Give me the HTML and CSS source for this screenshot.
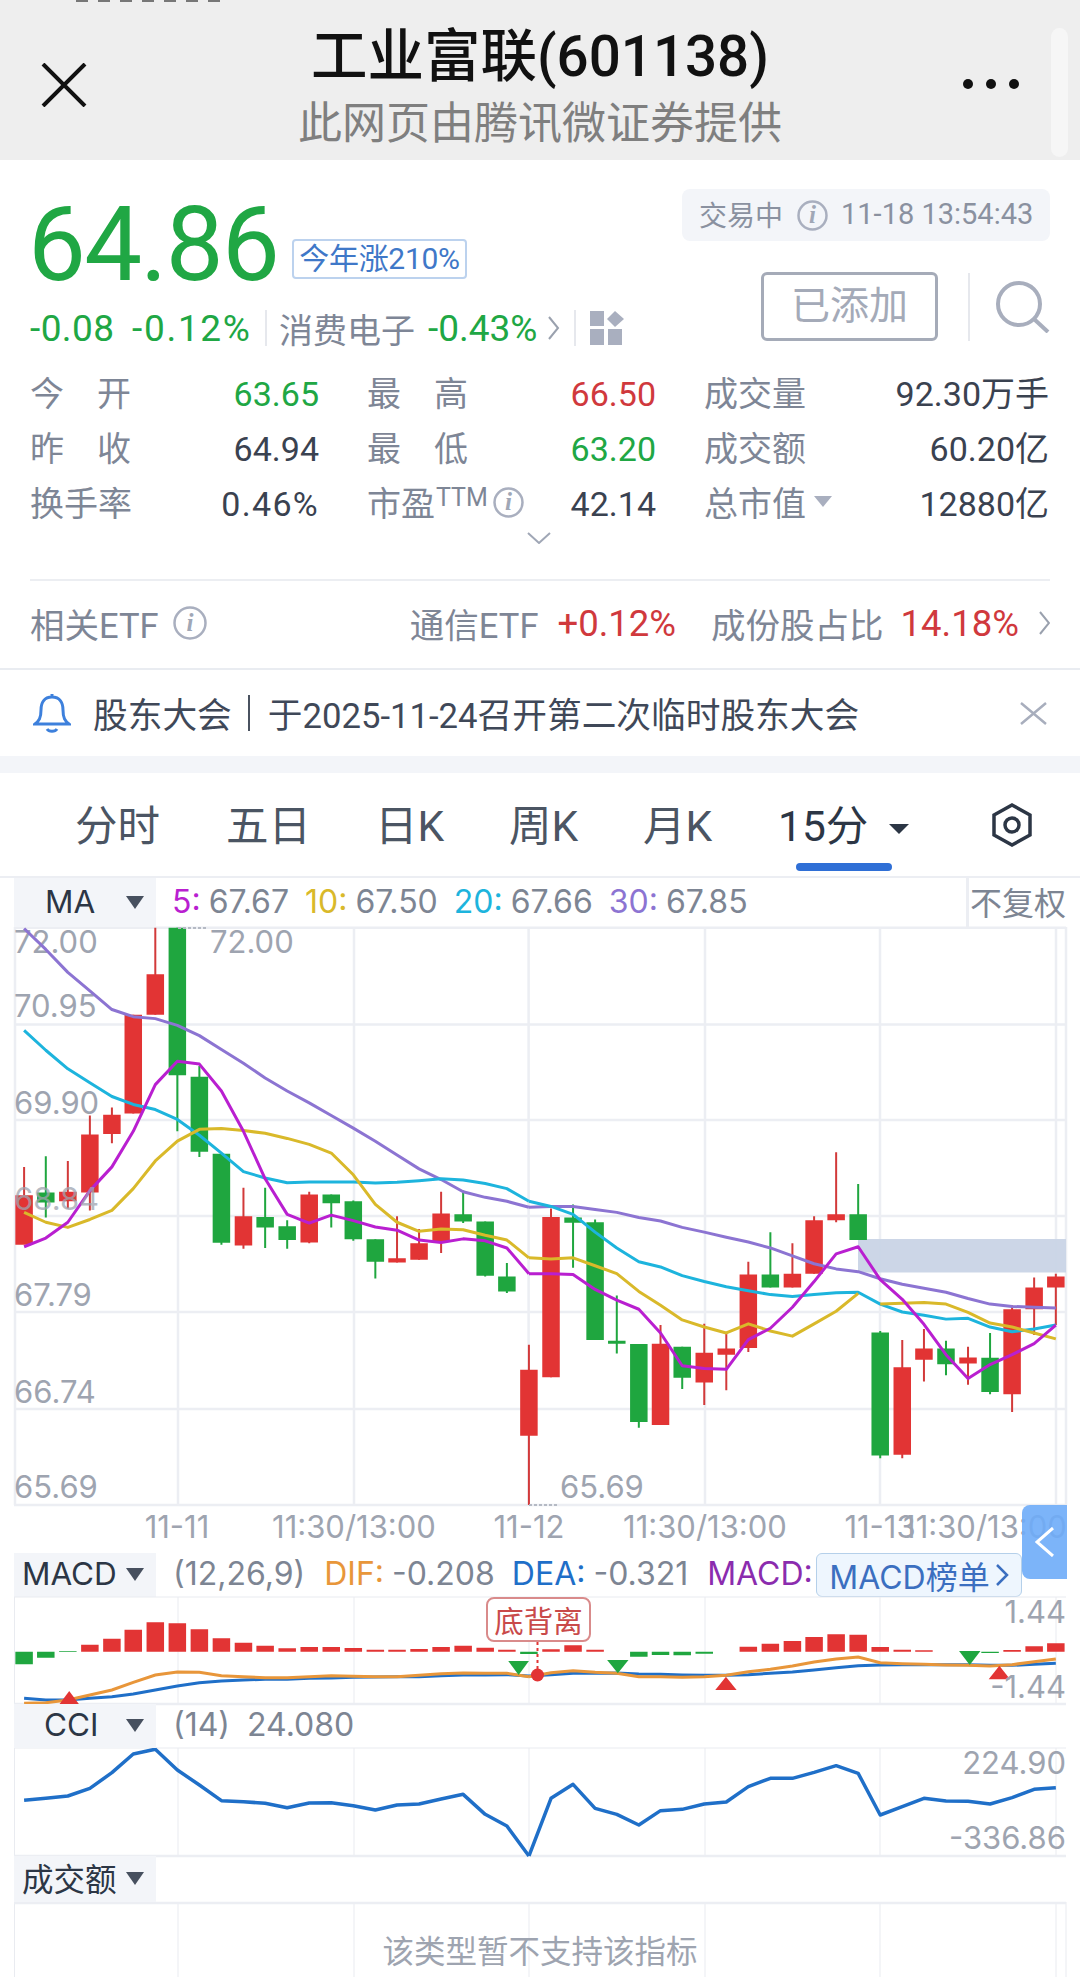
FILE: index.html
```html
<!DOCTYPE html>
<html lang="zh">
<head>
<meta charset="utf-8">
<title>工业富联(601138)</title>
<link rel="stylesheet" href="styles.css">
</head>
<body>
<div class="page">
  <header class="topbar">
    <div class="status-remnant"></div>
    <svg class="close-icon" width="46" height="44" viewBox="0 0 46 44"><path d="M2 1L44 43M44 1L2 43"/></svg>
    <div class="titles">
      <div class="title">工业富联(601138)</div>
      <div class="subtitle">此网页由腾讯微证券提供</div>
    </div>
    <div class="dots"><i></i><i></i><i></i></div>
    <div class="scroll-thumb"></div>
  </header>

  <section class="quote">
    <div class="quote-left">
      <div class="price-line">
        <span class="price">64.86</span>
        <span class="badge">今年涨210%</span>
      </div>
      <div class="change-line">
        <span class="green ch-a">-0.08</span>
        <span class="green ch-b">-0.12%</span>
        <span class="vline v1"></span>
        <span class="sector">消费电子</span>
        <span class="green ch-c">-0.43%</span>
        <svg class="chev" width="13" height="26" viewBox="0 0 13 26"><path d="M2 2L11 13L2 24"/></svg>
        <span class="vline v2"></span>
        <svg class="grid-icon" width="34" height="34" viewBox="0 0 34 34"><rect x="0" y="0" width="14" height="15"/><path d="M25 0L34 8L25 16L17 8Z"/><rect x="0" y="18" width="14" height="16"/><rect x="18" y="18" width="14" height="16"/></svg>
      </div>
    </div>
    <div class="quote-right">
      <div class="status-pill">
        <span>交易中</span>
        <svg class="info" width="31" height="31" viewBox="0 0 31 31"><circle cx="15.500" cy="15.500" r="14"/><text x="15.500" y="23" text-anchor="middle">i</text></svg>
        <span class="time">11-18 13:54:43</span>
      </div>
      <div class="actions">
        <div class="added">已添加</div>
        <span class="action-line"></span>
        <svg class="search" width="56" height="52" viewBox="0 0 56 52"><circle cx="25" cy="23" r="21"/><path d="M40 38L54 51"/></svg>
      </div>
    </div>
  </section>

  <section class="stats">
    <div class="cell"><span class="lbl just">今 开</span><span class="green">63.65</span></div>
    <div class="cell"><span class="lbl just">最 高</span><span class="red">66.50</span></div>
    <div class="cell"><span class="lbl">成交量</span><span class="val">92.30万手</span></div>
    <div class="cell"><span class="lbl just">昨 收</span><span class="val">64.94</span></div>
    <div class="cell"><span class="lbl just">最 低</span><span class="green">63.20</span></div>
    <div class="cell"><span class="lbl">成交额</span><span class="val">60.20亿</span></div>
    <div class="cell"><span class="lbl">换手率</span><span class="val pct">0.46%</span></div>
    <div class="cell"><span class="lbl pe">市盈<sup>TTM</sup><svg class="info" width="31" height="31" viewBox="0 0 31 31"><circle cx="15.500" cy="15.500" r="14"/><text x="15.500" y="23" text-anchor="middle">i</text></svg></span><span class="val">42.14</span></div>
    <div class="cell"><span class="lbl cap">总市值<i class="tri-small"></i></span><span class="val">12880亿</span></div>
  </section>
  <div class="more"><svg width="24" height="12" viewBox="0 0 24 12"><path d="M1 1L12 11L23 1"/></svg></div>

  <section class="etf">
    <span class="lbl">相关ETF</span>
    <svg class="info big" width="34" height="34" viewBox="0 0 34 34"><circle cx="17" cy="17" r="15.500"/><text x="17" y="25" text-anchor="middle">i</text></svg>
    <span class="spacer"></span>
    <span class="lbl">通信ETF</span>
    <span class="red etf-val">+0.12%</span>
    <span class="lbl etf-share">成份股占比</span>
    <span class="red etf-val etf-last">14.18%</span>
    <svg class="chev etf-chev" width="11" height="24" viewBox="0 0 11 24"><path d="M1 1L10 12L1 23"/></svg>
  </section>

  <section class="notice">
    <svg class="bell" width="38" height="40" viewBox="0 0 38 40"><path d="M19 1V4M19 4C11 4 8 10 8 17C8 25 6 28 2 31H36C32 28 30 25 30 17C30 10 27 4 19 4Z"/><path class="bell-foot" d="M14 36C16 39 22 39 24 36"/></svg>
    <span>股东大会</span>
    <span class="notice-line"></span>
    <span>于2025-11-24召开第二次临时股东大会</span>
    <span class="spacer"></span>
    <svg class="notice-x" width="27" height="23" viewBox="0 0 27 23"><path d="M1 1L26 22M26 1L1 22"/></svg>
  </section>
  <div class="band"></div>

  <nav class="tabs">
    <span class="tab t1">分时</span>
    <span class="tab t2">五日</span>
    <span class="tab t3">日K</span>
    <span class="tab t4">周K</span>
    <span class="tab t5">月K</span>
    <span class="tab t6 on">15分<i class="tri-tab"></i></span>
    <svg class="hex" width="40" height="44" viewBox="0 0 40 44"><path d="M20 2L38 12V32L20 42L2 32V12Z"/><circle cx="20" cy="22" r="7"/></svg>
    <span class="underline"></span>
  </nav>

  <div class="ind-row ma-row">
    <div class="ind-name ma-name"><span>MA</span><i class="tri"></i></div>
    <div class="ind-vals">
      <span class="c-ma5">5:</span><span>67.67</span>
      <span class="c-ma10">10:</span><span>67.50</span>
      <span class="c-ma20">20:</span><span>67.66</span>
      <span class="c-ma30">30:</span><span>67.85</span>
    </div>
    <div class="adj">不复权</div>
  </div>

  <svg class="chart" width="1080" height="626" viewBox="0 927 1080 626">
    <path class="grid" d="M14 927.700H1066M14 1024.600H1066M14 1120H1066M14 1216H1066M14 1312H1066M14 1409H1066M14 1505H1066M15 927V1505M178 927V1505M354 927V1505M528.600 927V1505M705 927V1505M880 927V1505M1056 927V1505M1066 927V1505"/>
    <rect class="zone" x="858" y="1239" width="208" height="33.500"/>
    <text class="axis" x="14" y="952.600">72.00</text>
    <text class="axis" x="14" y="1017">70.95</text>
    <text class="axis" x="14" y="1114">69.90</text>
    <text class="axis" x="14" y="1306">67.79</text>
    <text class="axis" x="14" y="1403">66.74</text>
    <text class="axis" x="14" y="1498">65.69</text>
    <g transform="translate(0,900) scale(.34435,.3954)">
      <path class="wick-r" d="M70 675V870M197 660V780M261 545V785M325 525V615M387 290V540M451 70V290M707 728V882M898 738V868M1153 800V917M1217 832V910M1281 738V893M1536 1125V1530"/>
      <path class="wick-g" d="M133 648V803M515 70V585M579 420V650M643 640V872M770 728V880M834 810V882M962 745V828M1026 760V862M1090 858V957M1345 735V817M1409 813V952M1472 918V994"/>
      <path class="body-r" d="M70 747V872M197 738V762M261 593V740M325 543V592M387 290V540M451 188V290M707 800V874M898 745V866M1153 906V917M1217 868V910M1281 793V865M1536 1188V1355"/>
      <path class="body-g" d="M133 740V765M515 70V443M579 447V637M643 642V867M770 802V828M834 825V860M962 745V767M1026 762V858M1090 858V915M1345 795V813M1409 813V950M1472 952V990"/>
      <polyline class="l-ma30" points="70,72 133,125 197,183 261,230 325,277 387,295 451,300 515,317 579,343 643,378 707,413 770,450 834,483 898,513 962,545 1026,577 1090,610 1153,645 1217,680 1281,707 1345,738 1409,752 1472,762 1536,777"/>
      <polyline class="l-ma20" points="70,330 133,380 197,427 261,462 325,497 387,517 451,530 515,555 579,595 643,640 707,687 770,703 834,715 898,713 962,713 1026,713 1090,716 1153,714 1217,710 1281,705 1345,708 1409,717 1472,730 1536,762"/>
      <polyline class="l-ma10" points="70,790 133,815 197,828 261,808 325,785 387,730 451,660 515,610 579,580 643,578 707,583 770,590 834,603 898,618 962,640 1026,695 1090,770 1153,815 1217,838 1281,832 1345,834 1409,848 1472,860 1536,905"/>
      <polyline class="l-ma5" points="70,877 133,855 197,815 261,735 325,675 387,585 451,467 515,408 579,415 643,483 707,585 770,705 834,795 898,817 962,797 1026,811 1090,827 1153,835 1217,860 1281,866 1345,857 1409,862 1472,880 1536,945"/>
    </g>
    <g transform="translate(540,900) scale(.34435,.3954)">
      <path class="wick-r" d="M32 780V1207M350 1075V1328M477 1072V1277M541 1095V1240M605 915V1143M733 868V980M796 800V945M860 638V815M1052 1113V1412M1115 1085V1218M1243 1130V1226M1371 1025V1295M1435 955V1100M1498 945V1075"/>
      <path class="wick-g" d="M96 770V930M160 808V1113M223 1000V1147M287 1123V1335M413 1130V1237M669 840V980M924 718V860M988 1090V1412M1179 1115V1202M1307 1095V1250"/>
      <path class="body-r" d="M32 802V1207M350 1122V1328M477 1145V1220M541 1134V1150M605 947V1133M733 945V980M796 810V945M860 795V810M1052 1182V1403M1115 1134V1163M1243 1157V1172M1371 1035V1250M1435 980V1035M1498 952V980"/>
      <path class="body-g" d="M96 803V816M160 815V1113M223 1115V1122M287 1123V1320M413 1130V1208M669 947V980M924 795V860M988 1094V1405M1179 1134V1174M1307 1158V1244"/>
      <polyline class="l-ma30" points="-32,777 32,775 96,775 160,783 223,790 287,803 350,812 413,828 477,840 541,853 605,865 669,880 733,900 796,920 860,933 924,940 988,958 1052,972 1115,982 1179,992 1243,1008 1307,1022 1371,1028 1435,1030 1498,1032"/>
      <polyline class="l-ma20" points="-32,762 32,775 96,795 160,840 223,880 287,915 350,928 413,950 477,965 541,978 605,988 669,998 733,1003 796,998 860,993 924,992 988,1022 1052,1042 1115,1050 1179,1060 1243,1058 1307,1080 1371,1092 1435,1085 1498,1075"/>
      <polyline class="l-ma10" points="-32,905 32,908 96,905 160,925 223,945 287,990 350,1025 413,1062 477,1080 541,1095 605,1072 669,1090 733,1103 796,1072 860,1040 924,995"/>
      <polyline class="l-ma10" points="988,1022 1052,1020 1115,1018 1179,1022 1243,1043 1307,1070 1371,1080 1435,1095 1498,1110"/>
      <polyline class="l-ma5" points="-32,945 32,945 96,947 160,985 223,1012 287,1035 350,1095 413,1178 477,1185 541,1187 605,1112 669,1083 733,1030 796,965 860,895 924,877 988,960 1052,1010 1115,1073 1179,1150 1243,1210 1307,1175 1371,1150 1435,1122 1498,1075"/>
    </g>
    <text class="axis faded" x="14" y="1210">68.84</text>
    <text class="axis mark" x="210" y="952.600">72.00</text>
    <text class="axis mark" x="560" y="1498">65.69</text>
    <path class="dotted" d="M178 928H208M529 1505H559"/>
    <text class="axis xl" x="177" y="1538" text-anchor="middle">11-11</text>
    <text class="axis xl" x="354" y="1538" text-anchor="middle">11:30/13:00</text>
    <text class="axis xl" x="529" y="1538" text-anchor="middle">11-12</text>
    <text class="axis xl" x="705" y="1538" text-anchor="middle">11:30/13:00</text>
    <text class="axis xl" x="880" y="1538" text-anchor="middle">11-13</text>
    <text class="axis xl" x="985" y="1538" text-anchor="middle">11:30/13:00</text>
  </svg>

  <div class="ind-row macd-row">
    <div class="ind-name"><span>MACD</span><i class="tri"></i></div>
    <div class="ind-vals">
      <span class="muted">(12,26,9)</span>
      <span class="c-dif">DIF:</span><span>-0.208</span>
      <span class="c-dea">DEA:</span><span>-0.321</span>
      <span class="c-macd">MACD:</span>
    </div>
    <div class="rank">MACD榜单<svg width="13" height="24" viewBox="0 0 13 24"><path d="M1 2L11 12L1 22"/></svg></div>
    <div class="side-tab"><svg width="20" height="30" viewBox="0 0 20 30"><path d="M18 1L2 15L18 29"/></svg></div>
  </div>

  <div class="panel">
    <svg class="chart" width="1080" height="107" viewBox="0 1597 1080 107">
      <path class="grid-thin" d="M14.500 1597V1704M178 1597V1704M354 1597V1704M529 1597V1704M705 1597V1704M880 1597V1704M1056 1597V1704"/>
      <path class="grid-thin" d="M14 1597H1066"/>
      <path class="grid" d="M14 1704H1066"/>
      <g transform="translate(0,1500) scale(.34435,.33333)">
        <path class="body-r" d="M261 434V455M325 416V455M387 389V455M451 367V455M515 370V455M579 388V455M643 415V455M707 428V455M770 437V455M834 445V455M898 441V455M962 441V455M1026 444V455M1090 449V455M1153 449V455M1217 447V455M1281 441V455M1345 437V455M1409 443V455M1472 449V455"/>
        <path class="body-g" d="M70 455V493M133 455V473M197 454V456M1536 455V462"/>
        <polyline class="l-dea" points="70,595 133,600 197,600 261,595 325,590 387,582 451,570 515,558 579,548 643,543 707,540 770,538 834,538 898,535 962,534 1026,532 1090,531 1153,530 1217,530 1281,527 1345,525 1409,525 1472,524 1536,528"/>
        <polyline class="l-dif" points="70,610 133,608 197,600 261,585 325,570 387,547 451,525 515,516 579,517 643,527 707,530 770,533 834,533 898,530 962,527 1026,529 1090,530 1153,530 1217,526 1281,521 1345,519 1409,520 1472,520 1536,530"/>
        <polygon class="tri-r" points="173,612 229,612 201,573"/>
        <polygon class="tri-g" points="1476,483 1536,483 1506,525"/>
      </g>
      <g transform="translate(540,1500) scale(.34435,.33333)">
        <path class="body-r" d="M32 448V455M96 436V455M160 449V455M605 440V455M669 431V455M733 423V455M796 411V455M860 403V455M924 404V455M988 441V455M1052 449V455M1115 451V455M1371 450V455M1435 439V455M1498 430V455"/>
        <path class="body-g" d="M287 455V470M350 455V465M413 455V466M477 455V461M1307 455V459"/>
        <polyline class="l-dea" points="-32,528 32,524 96,520 160,520 223,519 287,522 350,523 413,525 477,526 541,526 605,524 669,520 733,516 796,510 860,503 924,497 988,495 1052,494 1115,494 1179,494 1243,494 1307,496 1371,496 1435,493 1498,490"/>
        <polyline class="l-dif" points="-32,530 32,518 96,512 160,517 223,520 287,530 350,530 413,532 477,530 541,526 605,515 669,508 733,498 796,486 860,477 924,471 988,488 1052,491 1115,493 1179,495 1243,496 1307,498 1371,494 1435,485 1498,477"/>
        <polygon class="tri-g" points="195,480 257,480 226,520"/>
        <polygon class="tri-r" points="509,570 571,570 540,530"/>
        <polygon class="tri-g" points="1217,453 1279,453 1248,495"/>
        <polygon class="tri-r" points="1303,538 1365,538 1334,497"/>
      </g>
      <circle class="dot-r" cx="537.500" cy="1675" r="6.500"/>
      <path class="dash-r" d="M537.500 1642V1670"/>
      <text class="axis" x="1066" y="1623" text-anchor="end">1.44</text>
      <text class="axis" x="1066" y="1698" text-anchor="end">-1.44</text>
    </svg>
    <div class="signal">底背离</div>
  </div>

  <div class="ind-row cci-row">
    <div class="ind-name cci-name"><span>CCI</span><i class="tri"></i></div>
    <div class="ind-vals cci-vals"><span class="muted">(14)</span><span class="muted">24.080</span></div>
  </div>
  <svg class="chart" width="1080" height="108" viewBox="0 1748 1080 108">
    <path class="grid-thin" d="M14.500 1748V1856M178 1748V1856M354 1748V1856M529 1748V1856M705 1748V1856M880 1748V1856M1056 1748V1856M14 1748H1066"/>
    <path class="grid" d="M14 1856H1066"/>
    <g transform="translate(0,1500) scale(.34435,.33333)">
      <polyline class="l-cci" points="70,901 133,895 197,888 261,865 325,818 387,762 451,748 515,810 579,855 643,902 707,905 770,910 834,923 898,909 962,908 1026,917 1090,930 1153,915 1217,912 1281,897 1345,883 1409,943 1472,978 1536,1068"/>
    </g>
    <g transform="translate(540,1500) scale(.34435,.33333)">
      <polyline class="l-cci" points="-32,1068 32,895 96,853 160,925 223,943 287,975 350,932 413,928 477,912 541,906 605,860 669,835 733,835 796,817 860,797 924,820 988,945 1052,920 1115,895 1179,903 1243,904 1307,912 1371,893 1435,868 1498,863"/>
    </g>
    <text class="axis" x="1066" y="1774" text-anchor="end">224.90</text>
    <text class="axis" x="1066" y="1849" text-anchor="end">-336.86</text>
  </svg>

  <div class="ind-row vol-row">
    <div class="ind-name"><span>成交额</span><i class="tri"></i></div>
  </div>
  <svg class="chart" width="1080" height="75" viewBox="0 1902 1080 75">
    <path class="grid-thin" d="M14.500 1902V1977M178 1902V1977M354 1902V1977M529 1902V1977M705 1902V1977M880 1902V1977M1056 1902V1977M1066 1902V1977"/>
    <path class="grid" d="M14 1903H1066"/>
    <text class="axis empty" x="540" y="1963" text-anchor="middle">该类型暂不支持该指标</text>
  </svg>
</div>
</body>
</html>
```
FILE: styles.css
```css
* { box-sizing: border-box; }
html, body { margin: 0; padding: 0; background: #fff; }
body { font-family: Roboto, "Noto Sans CJK SC", sans-serif; color: #3a4250; }
.page { width: 1080px; height: 1977px; overflow: hidden; position: relative; }
i { font-style: normal; }

.green { color: #20a744; }
.red { color: #d0393d; }
.val { color: #3a4250; }
.lbl { color: #7e8696; }
.pct { letter-spacing: 1.300px; }

/* top bar */
.topbar { height: 160px; background: #eeeeee; display: flex; align-items: flex-start; position: relative; }
.status-remnant { position: absolute; left: 76px; top: 0; width: 144px; height: 2px; background: repeating-linear-gradient(90deg, #777 0 12px, transparent 12px 22px); }
.close-icon { margin: 63px 0 0 41px; flex: none; }
.close-icon path { fill: none; stroke: #111; stroke-width: 4; }
.titles { position: absolute; left: 0; right: 0; top: 24px; text-align: center; }
.title { font-size: 56.500px; line-height: 66px; color: #111; font-weight: 500; }
.subtitle { font-size: 44px; line-height: 56px; color: #7f7f7f; margin-top: 6px; }
.dots { margin: 79px 0 0 auto; display: flex; gap: 13px; padding-right: 61px; }
.dots i { width: 10px; height: 10px; border-radius: 50%; background: #111; }
.scroll-thumb { position: absolute; left: 1051px; top: 28px; width: 17px; height: 129px; border-radius: 9px; background: #f6f6f6; }

/* quote */
.quote { height: 200px; display: flex; justify-content: space-between; padding: 29px 30px 0 30px; }
.quote-left { display: flex; flex-direction: column; }
.price-line { display: flex; align-items: flex-start; height: 118px; }
.price { font-size: 103px; line-height: 104px; color: #20a744; letter-spacing: -1.700px; margin: 4px 0 0 -2px; width: 264px; flex: none; }
.badge { margin-top: 50px; height: 40px; width: 175px; border: 2px solid #bcd2ee; border-radius: 4px; font-size: 30px; line-height: 36px; text-align: center; color: #3f78c8; white-space: nowrap; letter-spacing: -.300px; }
.change-line { display: flex; align-items: center; height: 40px; font-size: 34px; white-space: nowrap; margin-top: 1px; }
.change-line .green { font-size: 37px; }
.ch-a { width: 102px; letter-spacing: .400px; }
.ch-b { width: 133px; letter-spacing: 1.700px; flex: none; }
.vline { width: 2px; height: 36px; background: #e6e8ed; flex: none; }
.sector { margin-left: 12px; color: #7e8696; width: 149px; }
.ch-c { width: 119px; }
.chev { flex: none; }
.chev path { fill: none; stroke: #9aa1ae; stroke-width: 2; }
.v2 { margin-left: 14px; }
.grid-icon { margin-left: 14px; fill: #a9afbf; }

.quote-right { width: 368px; display: flex; flex-direction: column; align-items: flex-end; }
.status-pill { width: 368px; height: 52px; background: #f3f5f9; border-radius: 8px; display: flex; align-items: center; padding: 0 0 3px 17px; font-size: 28px; color: #8a91a0; white-space: nowrap; }
.status-pill .info { margin: 3px 0 0 14px; }
.time { font-size: 29px; margin-left: 13px; }
.info circle { fill: none; stroke: #a9afbf; stroke-width: 2.500; }
.info text { font: italic bold 25px "Liberation Serif", serif; fill: #a0a7b6; }
.actions { display: flex; align-items: center; margin-top: 31px; height: 69px; }
.added { width: 177px; height: 69px; border: 3px solid #a5abb8; border-radius: 6px; font-size: 39px; line-height: 62px; text-align: center; color: #a4aab8; }
.action-line { width: 2px; height: 68px; background: #e6e8ed; margin-left: 30px; }
.search { margin-left: 24px; }
.search circle, .search path { fill: none; stroke: #a8aebd; stroke-width: 4; }

/* stats */
.stats { display: grid; grid-template-columns: 289px 289px 345px; column-gap: 48px; grid-auto-rows: 55px; padding: 7px 30px 0; height: 172px; font-size: 34px; }
.cell { display: flex; justify-content: space-between; align-items: center; white-space: nowrap; line-height: 55px; }
.just { width: 101px; text-align-last: justify; }
.pe { display: flex; align-items: center; }
.pe sup { font-size: 25px; line-height: 1; margin: -14px 0 0 1px; }
.pe .info { margin: -4px 0 0 5px; }
.cap { display: flex; align-items: center; }
.tri-small { width: 0; height: 0; border-left: 9px solid transparent; border-right: 9px solid transparent; border-top: 11px solid #a9afbf; margin: -6px 0 0 8px; }
.more { height: 47px; display: flex; justify-content: center; align-items: flex-start; }
.more svg { margin: 0 0 0 -2px; }
.more path { fill: none; stroke: #a0a7b6; stroke-width: 2; }

/* etf */
.etf { margin: 0 30px; height: 89px; border-top: 2px solid #eceef2; display: flex; align-items: center; font-size: 34.500px; white-space: nowrap; padding-bottom: 3px; }
.etf .info.big { margin-left: 14px; }
.spacer { flex: 1; }
.etf-val { margin-left: 19px; font-size: 36.500px; }
.etf-last { margin-left: 17px; }
.etf-share { margin-left: 35px; }
.etf-chev { margin-left: 20px; }
.notice { height: 88px; border-top: 2px solid #e9ecf1; display: flex; align-items: center; padding: 0 33px; font-size: 34.700px; color: #3f4858; white-space: nowrap; }
.bell { margin-right: 22px; flex: none; }
.bell path { fill: none; stroke: #3d80dc; stroke-width: 3; }
.notice-line { width: 2px; height: 36px; background: #4a5260; margin: 0 18px 0 16px; }
.notice-x { flex: none; }
.notice-x path { fill: none; stroke: #a8aebd; stroke-width: 2.500; }
.band { height: 17px; background: #f3f5f9; }

/* tabs */
.tabs { height: 105px; position: relative; font-size: 42.500px; color: #4b5563; border-bottom: 2px solid #eceef3; white-space: nowrap; }
.tab { position: absolute; top: 25px; line-height: 58px; }
.t1 { left: 75px; } .t2 { left: 226px; } .t3 { left: 375px; } .t4 { left: 509px; } .t5 { left: 643px; } .t6 { left: 778px; }
.on { color: #2c3645; display: flex; align-items: center; }
.tri-tab { width: 0; height: 0; border-left: 10px solid transparent; border-right: 10px solid transparent; border-top: 10px solid #2c3645; margin: 4px 0 0 21px; }
.hex { position: absolute; left: 992px; top: 30px; }
.hex path, .hex circle { fill: none; stroke: #2c3645; stroke-width: 3.500; }
.underline { position: absolute; left: 796px; top: 90px; width: 96px; height: 8px; border-radius: 4px; background: #2f6fd6; }

/* indicator rows */
.ind-row { display: flex; align-items: stretch; position: relative; font-family: Inter, "Noto Sans CJK SC", sans-serif; font-size: 32px; white-space: nowrap; color: #7d8593; }
.ma-row { height: 49px; }
.macd-row { height: 44px; }
.cci-row { height: 44px; }
.vol-row { height: 46px; }
.ind-name { margin-left: 14px; width: 142px; background: #f3f5f9; color: #2c3645; display: flex; align-items: center; padding: 0 0 3px 8px; flex: none; position: relative; }
.ma-name { padding-left: 31px; }
.cci-name { padding-left: 30px; }
.vol-row .ind-name { padding-bottom: 5px; }
.ind-name span { font-size: 31.500px; }
.tri { position: absolute; left: 112px; top: 50%; margin-top: -7px; width: 0; height: 0; border-left: 9px solid transparent; border-right: 9px solid transparent; border-top: 13px solid #47505f; }
.ind-vals { display: flex; align-items: center; padding: 0 0 3px 17px; gap: 8px; }
.ma-row .ind-vals { padding-left: 16px; }
.cci-vals { gap: 17px; }
.muted { color: #7d8593; }
.c-ma5 { color: #b91fd0; } .c-ma10 { color: #d9b92a; margin-left: 8px; } .c-ma20 { color: #1db4dd; margin-left: 8px; } .c-ma30 { color: #8c74d2; margin-left: 8px; }
.c-dif { color: #e8963a; margin-left: 11px; } .c-dea { color: #1f6fc8; margin-left: 9px; } .c-macd { color: #8b2cae; margin-left: 11px; }
.adj { margin-left: auto; margin-right: 14px; width: 100px; border-left: 3px solid #eceef3; padding: 0 0 3px 1px; display: flex; align-items: center; font-family: "Noto Sans CJK SC", sans-serif; font-size: 32px; color: #7d8593; }
.rank { position: absolute; left: 816px; top: 0; width: 206px; height: 44px; background: #eef6fe; border: 1px solid #b5d0ea; border-radius: 6px; color: #3b6fc0; font-size: 32px; display: flex; align-items: center; justify-content: center; gap: 6px; }
.rank path { fill: none; stroke: #3b6fc0; stroke-width: 2.500; }
.side-tab { position: absolute; left: 1022px; top: -48px; width: 45px; height: 74px; border-radius: 8px 0 0 8px; background: rgba(110, 172, 248, .9); display: flex; align-items: center; justify-content: center; }
.side-tab path { fill: none; stroke: #fff; stroke-width: 3; }

/* charts */
.chart { display: block; overflow: visible; }
.chart path, .chart polyline { vector-effect: non-scaling-stroke; fill: none; }
.grid { stroke: #eceef3; stroke-width: 2.500; }
.grid-thin { stroke: #e9ebf0; stroke-width: 1; }
.zone { fill: #c9d4e6; opacity: .95; }
.wick-r { stroke: #d23a3a; stroke-width: 2; }
.wick-g { stroke: #1fa63f; stroke-width: 2; }
.body-r { stroke: #e23434; stroke-width: 17.500; }
.body-g { stroke: #1fa63f; stroke-width: 17.500; }
.l-ma5 { stroke: #b91fd0; stroke-width: 3; stroke-linejoin: round; }
.l-ma10 { stroke: #d9b92a; stroke-width: 3; stroke-linejoin: round; }
.l-ma20 { stroke: #1db4dd; stroke-width: 3; stroke-linejoin: round; }
.l-ma30 { stroke: #8c74d2; stroke-width: 3; stroke-linejoin: round; }
.l-dea { stroke: #1f6fc8; stroke-width: 3; }
.l-dif { stroke: #e8963a; stroke-width: 3; }
.l-cci { stroke: #1f6fc8; stroke-width: 3.500; stroke-linejoin: round; }
.tri-r { fill: #e23434; }
.tri-g { fill: #1fa63f; }
.dot-r { fill: #e23434; }
.chart .dash-r { stroke: #e23434; stroke-width: 2; stroke-dasharray: 3 3; }
.chart .dotted { stroke: #b5bac4; stroke-width: 2; stroke-dasharray: 3 2; }
.axis { font-family: Inter, "Noto Sans CJK SC", sans-serif; font-size: 31px; fill: #9ea4b0; }
.faded { opacity: .75; }
.xl { font-size: 31px; }
.empty { font-size: 31.500px; }
.panel { position: relative; height: 107px; }
.signal { position: absolute; left: 486px; top: 0; width: 105px; height: 45px; background: #fff; border: 2px solid #d98b8b; border-radius: 8px; color: #c94a4a; font-size: 29.500px; line-height: 41px; text-align: center; font-family: "Noto Sans CJK SC", sans-serif; }
```
